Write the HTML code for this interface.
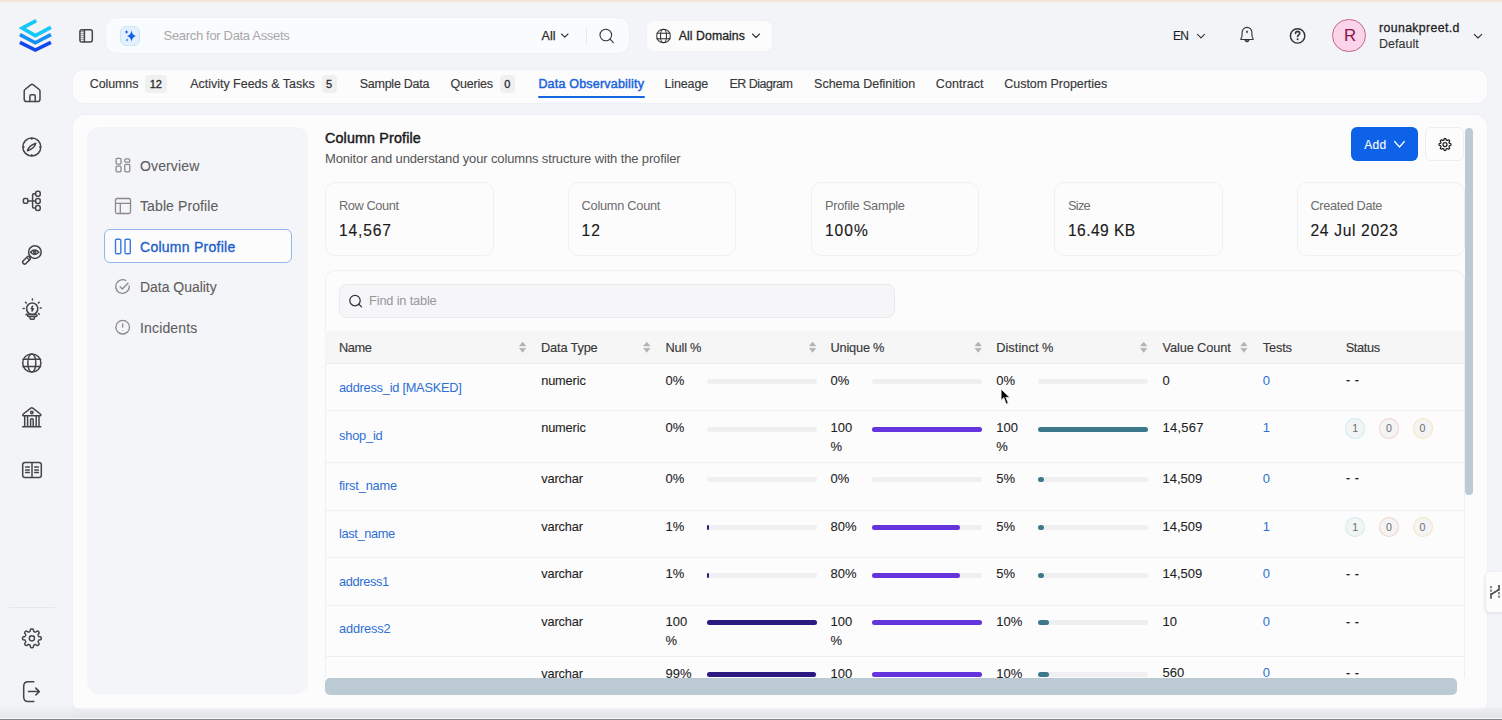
<!DOCTYPE html>
<html><head><meta charset="utf-8"><style>
*{box-sizing:border-box;margin:0;padding:0}
html,body{width:1502px;height:720px;overflow:hidden;background:#f3f4f8;font-family:"Liberation Sans",sans-serif;color:#222}
.a{position:absolute}
.t{position:absolute;white-space:nowrap}
svg.ov{position:absolute;left:0;top:0}
</style></head><body>
<div class="a" style="left:0;top:0;width:1502px;height:2px;background:#f6e2d7"></div>
<div class="a" style="left:0;top:700px;width:73px;height:18px;background:linear-gradient(#f3f4f8,#f0f1f4 45%,#e6e7ea)"></div>
<div class="a" style="left:73px;top:708px;width:1429px;height:10px;background:linear-gradient(#eceef2,#e3e4e8)"></div>
<div class="a" style="left:0;top:718px;width:1502px;height:1px;background:#f7f7f8"></div>
<div class="a" style="left:0;top:719px;width:1502px;height:1px;background:#86868a"></div>
<div class="a" style="left:9.3px;top:606.5px;width:46.2px;height:1px;background:#e6e7eb"></div>
<div class="a" style="left:105px;top:17px;width:525px;height:37px;background:#fafbfc;border-radius:12px;border:1px solid #edf0f5"></div>
<div class="a" style="left:120px;top:26px;width:20px;height:20px;border-radius:6px;background:#e3f0fd;border:1px solid #cce5fa"></div>
<div class="t" style="left:163.6px;top:29.40px;font-size:13px;line-height:13px;color:#a8a8ab;letter-spacing:-0.326px;">Search for Data Assets</div>
<div class="t" style="left:541.6px;top:29.72px;font-size:12.5px;line-height:12.5px;color:#2a2a2a;-webkit-text-stroke:0.25px #2a2a2a;">All</div>
<div class="a" style="left:586px;top:27px;width:1px;height:18px;background:#e6e8ec"></div>
<div class="a" style="left:646px;top:20px;width:127px;height:32px;background:#fcfcfd;border-radius:8px;border:1px solid #f0f1f4"></div>
<div class="t" style="left:678.8px;top:29.89px;font-size:12.3px;line-height:12.3px;color:#1f1f1f;letter-spacing:0.049px;-webkit-text-stroke:0.3px #1f1f1f;">All Domains</div>
<div class="t" style="left:1173.1px;top:29.74px;font-size:12px;line-height:12px;color:#1f1f1f;letter-spacing:-0.772px;-webkit-text-stroke:0.12px #1f1f1f;">EN</div>
<div class="a" style="left:1332.1px;top:18.8px;width:33.5px;height:33.5px;border-radius:50%;background:#fbd4e9;border:1px solid #c3648a"></div>
<div class="t" style="left:1343.9px;top:27.78px;font-size:16.8px;line-height:16.8px;color:#8c1550;letter-spacing:-3.025px;-webkit-text-stroke:0.1px #8c1550;">R</div>
<div class="t" style="left:1379.1px;top:21.59px;font-size:12.3px;line-height:12.3px;color:#1f1f1f;letter-spacing:0.359px;-webkit-text-stroke:0.3px #1f1f1f;">rounakpreet.d</div>
<div class="t" style="left:1379px;top:38.02px;font-size:12.5px;line-height:12.5px;color:#333;letter-spacing:0.015px;-webkit-text-stroke:0.1px #333;">Default</div>
<div class="a" style="left:73px;top:69.5px;width:1413.7px;height:33.5px;background:#fcfcfd;border-radius:10px;box-shadow:0 0 0 1px #eef0f7"></div>
<div class="t" style="left:89.8px;top:77.62px;font-size:12.5px;line-height:12.5px;color:#383838;letter-spacing:-0.121px;-webkit-text-stroke:0.15px #383838;">Columns</div>
<div class="a" style="left:145px;top:75px;width:22px;height:18px;border-radius:4px;background:#eff0f2"></div>
<div class="t" style="left:149.7px;top:78.99px;font-size:11px;line-height:11px;color:#2a2a2a;-webkit-text-stroke:0.3px #2a2a2a;">12</div>
<div class="t" style="left:190.2px;top:77.62px;font-size:12.5px;line-height:12.5px;color:#383838;letter-spacing:-0.015px;-webkit-text-stroke:0.15px #383838;">Activity Feeds &amp; Tasks</div>
<div class="a" style="left:322px;top:75px;width:14.5px;height:18px;border-radius:4px;background:#eff0f2"></div>
<div class="t" style="left:326.05px;top:78.99px;font-size:11px;line-height:11px;color:#2a2a2a;-webkit-text-stroke:0.3px #2a2a2a;">5</div>
<div class="t" style="left:359.7px;top:77.62px;font-size:12.5px;line-height:12.5px;color:#383838;letter-spacing:-0.247px;-webkit-text-stroke:0.15px #383838;">Sample Data</div>
<div class="t" style="left:450.6px;top:77.62px;font-size:12.5px;line-height:12.5px;color:#383838;letter-spacing:-0.23px;-webkit-text-stroke:0.15px #383838;">Queries</div>
<div class="a" style="left:500.4px;top:75px;width:14.200000000000045px;height:18px;border-radius:4px;background:#eff0f2"></div>
<div class="t" style="left:504.3px;top:78.99px;font-size:11px;line-height:11px;color:#2a2a2a;-webkit-text-stroke:0.3px #2a2a2a;">0</div>
<div class="t" style="left:538.4px;top:78.02px;font-size:12.5px;line-height:12.5px;color:#1763dc;letter-spacing:0.199px;-webkit-text-stroke:0.45px #1763dc;">Data Observability</div>
<div class="a" style="left:537.9px;top:96.2px;width:107px;height:2px;background:#1566e0;border-radius:1px"></div>
<div class="t" style="left:664.4px;top:77.62px;font-size:12.5px;line-height:12.5px;color:#383838;letter-spacing:-0.1px;-webkit-text-stroke:0.15px #383838;">Lineage</div>
<div class="t" style="left:729.4px;top:77.62px;font-size:12.5px;line-height:12.5px;color:#383838;letter-spacing:-0.498px;-webkit-text-stroke:0.15px #383838;">ER Diagram</div>
<div class="t" style="left:814.1px;top:77.62px;font-size:12.5px;line-height:12.5px;color:#383838;letter-spacing:-0.028px;-webkit-text-stroke:0.15px #383838;">Schema Definition</div>
<div class="t" style="left:935.8px;top:77.62px;font-size:12.5px;line-height:12.5px;color:#383838;letter-spacing:0.079px;-webkit-text-stroke:0.15px #383838;">Contract</div>
<div class="t" style="left:1004.3px;top:77.62px;font-size:12.5px;line-height:12.5px;color:#383838;letter-spacing:-0.038px;-webkit-text-stroke:0.15px #383838;">Custom Properties</div>
<div class="a" style="left:73px;top:114.7px;width:1413.7px;height:593px;background:#fcfcfd;border-radius:12px 12px 5px 5px;box-shadow:0 0 0 1px #eff1f7"></div>
<div class="a" style="left:87px;top:127.4px;width:221px;height:567px;background:#f4f5f8;border-radius:12px"></div>
<div class="a" style="left:104px;top:229px;width:188px;height:34px;background:#fcfcfd;border:1px solid #8fb6ef;border-radius:6px"></div>
<div class="t" style="left:140px;top:158.85px;font-size:14px;line-height:14px;color:#5e5e5e;letter-spacing:0.134px;-webkit-text-stroke:0.1px #5e5e5e;">Overview</div>
<div class="t" style="left:140px;top:199.35px;font-size:14px;line-height:14px;color:#5e5e5e;letter-spacing:0.104px;-webkit-text-stroke:0.1px #5e5e5e;">Table Profile</div>
<div class="t" style="left:140px;top:239.85px;font-size:14px;line-height:14px;color:#1d60cc;letter-spacing:0.267px;-webkit-text-stroke:0.35px #1d60cc;">Column Profile</div>
<div class="t" style="left:140px;top:280.35px;font-size:14px;line-height:14px;color:#5e5e5e;letter-spacing:-0.032px;-webkit-text-stroke:0.1px #5e5e5e;">Data Quality</div>
<div class="t" style="left:140px;top:320.85px;font-size:14px;line-height:14px;color:#5e5e5e;letter-spacing:0.157px;-webkit-text-stroke:0.1px #5e5e5e;">Incidents</div>
<div class="t" style="left:325px;top:131.00px;font-size:14.3px;line-height:14.3px;color:#1a1a1a;letter-spacing:0.156px;-webkit-text-stroke:0.45px #1a1a1a;">Column Profile</div>
<div class="t" style="left:325px;top:151.80px;font-size:13px;line-height:13px;color:#555;letter-spacing:-0.139px;">Monitor and understand your columns structure with the profiler</div>
<div class="a" style="left:1351px;top:127.4px;width:67.1px;height:33.7px;background:#0e62e8;border-radius:6px"></div>
<div class="t" style="left:1364.3px;top:139.04px;font-size:12px;line-height:12px;color:#fff;letter-spacing:0.27px;-webkit-text-stroke:0.1px #fff;">Add</div>
<div class="a" style="left:1425.4px;top:127.4px;width:38.6px;height:33.5px;background:#fcfcfd;border:1px solid #eceef1;border-radius:6px"></div>
<div class="a" style="left:325px;top:182.3px;width:168.5px;height:73.5px;border:1px solid #edf0f6;border-radius:10px;background:#fcfcfd"></div>
<div class="t" style="left:339px;top:200.06px;font-size:12.8px;line-height:12.8px;color:#6c6c6c;letter-spacing:-0.414px;">Row Count</div>
<div class="t" style="left:339px;top:223.39px;font-size:15.6px;line-height:15.6px;color:#1a1a1a;letter-spacing:0.839px;-webkit-text-stroke:0.15px #1a1a1a;">14,567</div>
<div class="a" style="left:567.6px;top:182.3px;width:168.5px;height:73.5px;border:1px solid #edf0f6;border-radius:10px;background:#fcfcfd"></div>
<div class="t" style="left:581.6px;top:200.06px;font-size:12.8px;line-height:12.8px;color:#6c6c6c;letter-spacing:-0.274px;">Column Count</div>
<div class="t" style="left:581.6px;top:223.39px;font-size:15.6px;line-height:15.6px;color:#1a1a1a;letter-spacing:0.941px;-webkit-text-stroke:0.15px #1a1a1a;">12</div>
<div class="a" style="left:810.9px;top:182.3px;width:168.5px;height:73.5px;border:1px solid #edf0f6;border-radius:10px;background:#fcfcfd"></div>
<div class="t" style="left:824.9px;top:200.06px;font-size:12.8px;line-height:12.8px;color:#6c6c6c;letter-spacing:-0.24px;">Profile Sample</div>
<div class="t" style="left:824.9px;top:223.39px;font-size:15.6px;line-height:15.6px;color:#1a1a1a;letter-spacing:1.036px;-webkit-text-stroke:0.15px #1a1a1a;">100%</div>
<div class="a" style="left:1054px;top:182.3px;width:168.5px;height:73.5px;border:1px solid #edf0f6;border-radius:10px;background:#fcfcfd"></div>
<div class="t" style="left:1068px;top:200.06px;font-size:12.8px;line-height:12.8px;color:#6c6c6c;letter-spacing:-0.735px;">Size</div>
<div class="t" style="left:1068px;top:223.39px;font-size:15.6px;line-height:15.6px;color:#1a1a1a;letter-spacing:0.433px;-webkit-text-stroke:0.15px #1a1a1a;">16.49 KB</div>
<div class="a" style="left:1296.5px;top:182.3px;width:168.5px;height:73.5px;border:1px solid #edf0f6;border-radius:10px;background:#fcfcfd"></div>
<div class="t" style="left:1310.5px;top:200.06px;font-size:12.8px;line-height:12.8px;color:#6c6c6c;letter-spacing:-0.375px;">Created Date</div>
<div class="t" style="left:1310.5px;top:223.39px;font-size:15.6px;line-height:15.6px;color:#1a1a1a;letter-spacing:0.666px;-webkit-text-stroke:0.15px #1a1a1a;">24 Jul 2023</div>
<div class="a" style="left:325px;top:270px;width:1140px;height:408px;border:1px solid #eff0f3;border-bottom:none;border-radius:10px 10px 0 0;background:#fcfcfd"></div>
<div class="a" style="left:338.8px;top:284px;width:556px;height:34px;border:1px solid #e9eaee;border-radius:8px;background:#f6f6f8"></div>
<div class="t" style="left:369.1px;top:294.56px;font-size:12.8px;line-height:12.8px;color:#97979b;letter-spacing:-0.177px;">Find in table</div>
<div class="a" style="left:325px;top:330.7px;width:1139px;height:33.2px;background:#f6f6f7;border-bottom:1px solid #ececee"></div>
<div class="t" style="left:339px;top:341.96px;font-size:12.8px;line-height:12.8px;color:#3a3a3a;letter-spacing:-0.414px;-webkit-text-stroke:0.15px #3a3a3a;">Name</div>
<div class="t" style="left:541px;top:341.96px;font-size:12.8px;line-height:12.8px;color:#3a3a3a;letter-spacing:-0.176px;-webkit-text-stroke:0.15px #3a3a3a;">Data Type</div>
<div class="t" style="left:665.6px;top:341.96px;font-size:12.8px;line-height:12.8px;color:#3a3a3a;letter-spacing:-0.217px;-webkit-text-stroke:0.15px #3a3a3a;">Null %</div>
<div class="t" style="left:830.6px;top:341.96px;font-size:12.8px;line-height:12.8px;color:#3a3a3a;letter-spacing:-0.229px;-webkit-text-stroke:0.15px #3a3a3a;">Unique %</div>
<div class="t" style="left:996.2px;top:341.96px;font-size:12.8px;line-height:12.8px;color:#3a3a3a;letter-spacing:0.045px;-webkit-text-stroke:0.15px #3a3a3a;">Distinct %</div>
<div class="t" style="left:1162.5px;top:341.96px;font-size:12.8px;line-height:12.8px;color:#3a3a3a;letter-spacing:-0.128px;-webkit-text-stroke:0.15px #3a3a3a;">Value Count</div>
<div class="t" style="left:1262.7px;top:341.96px;font-size:12.8px;line-height:12.8px;color:#3a3a3a;letter-spacing:-0.144px;-webkit-text-stroke:0.15px #3a3a3a;">Tests</div>
<div class="t" style="left:1345.7px;top:341.96px;font-size:12.8px;line-height:12.8px;color:#3a3a3a;letter-spacing:-0.356px;-webkit-text-stroke:0.15px #3a3a3a;">Status</div>
<div class="t" style="left:339px;top:382.16px;font-size:12.8px;line-height:12.8px;color:#2e6fd3;letter-spacing:-0.252px;">address_id [MASKED]</div>
<div class="t" style="left:541.2px;top:374.76px;font-size:12.8px;line-height:12.8px;color:#1f1f1f;letter-spacing:-0.153px;-webkit-text-stroke:0.1px #1f1f1f;">numeric</div>
<div class="t" style="left:665.6px;top:373.80px;font-size:13px;line-height:13px;color:#1f1f1f;-webkit-text-stroke:0.1px #1f1f1f;">0%</div>
<div class="t" style="left:830.6px;top:373.80px;font-size:13px;line-height:13px;color:#1f1f1f;-webkit-text-stroke:0.1px #1f1f1f;">0%</div>
<div class="t" style="left:996.2px;top:373.80px;font-size:13px;line-height:13px;color:#1f1f1f;-webkit-text-stroke:0.1px #1f1f1f;">0%</div>
<div class="a" style="left:706.7px;top:379.2px;width:110px;height:5px;border-radius:3px;background:#efeff1"></div>
<div class="a" style="left:872.3px;top:379.2px;width:110px;height:5px;border-radius:3px;background:#efeff1"></div>
<div class="a" style="left:1038.3px;top:379.2px;width:110px;height:5px;border-radius:3px;background:#efeff1"></div>
<div class="t" style="left:1162.5px;top:373.50px;font-size:13px;line-height:13px;color:#1f1f1f;-webkit-text-stroke:0.1px #1f1f1f;">0</div>
<div class="t" style="left:1262.7px;top:373.50px;font-size:13px;line-height:13px;color:#2e6fd3;">0</div>
<div class="t" style="left:1346px;top:374.42px;font-size:12.5px;line-height:12.5px;color:#222;letter-spacing:0.594px;-webkit-text-stroke:0.2px #222;">- -</div>
<div class="a" style="left:325px;top:410.3px;width:1139px;height:1px;background:#eeeff1"></div>
<div class="t" style="left:339px;top:429.66px;font-size:12.8px;line-height:12.8px;color:#2e6fd3;letter-spacing:-0.188px;">shop_id</div>
<div class="t" style="left:541.2px;top:422.36px;font-size:12.8px;line-height:12.8px;color:#1f1f1f;letter-spacing:-0.153px;-webkit-text-stroke:0.1px #1f1f1f;">numeric</div>
<div class="t" style="left:665.6px;top:421.40px;font-size:13px;line-height:13px;color:#1f1f1f;-webkit-text-stroke:0.1px #1f1f1f;">0%</div>
<div class="t" style="left:830.6px;top:421.40px;font-size:13px;line-height:13px;color:#1f1f1f;-webkit-text-stroke:0.1px #1f1f1f;">100</div>
<div class="t" style="left:830.6px;top:440.40px;font-size:13px;line-height:13px;color:#1f1f1f;-webkit-text-stroke:0.1px #1f1f1f;">%</div>
<div class="t" style="left:996.2px;top:421.40px;font-size:13px;line-height:13px;color:#1f1f1f;-webkit-text-stroke:0.1px #1f1f1f;">100</div>
<div class="t" style="left:996.2px;top:440.40px;font-size:13px;line-height:13px;color:#1f1f1f;-webkit-text-stroke:0.1px #1f1f1f;">%</div>
<div class="a" style="left:706.7px;top:426.8px;width:110px;height:5px;border-radius:3px;background:#efeff1"></div>
<div class="a" style="left:872.3px;top:426.8px;width:110px;height:5px;border-radius:3px;background:#efeff1"></div>
<div class="a" style="left:872.3px;top:426.8px;width:110.0px;height:5px;border-radius:2.5px;background:#6434dd"></div>
<div class="a" style="left:1038.3px;top:426.8px;width:110px;height:5px;border-radius:3px;background:#efeff1"></div>
<div class="a" style="left:1038.3px;top:426.8px;width:110.0px;height:5px;border-radius:2.5px;background:#3c7a8b"></div>
<div class="t" style="left:1162.5px;top:421.10px;font-size:13px;line-height:13px;color:#1f1f1f;letter-spacing:0.227px;-webkit-text-stroke:0.1px #1f1f1f;">14,567</div>
<div class="t" style="left:1262.7px;top:421.10px;font-size:13px;line-height:13px;color:#2e6fd3;">1</div>
<div class="a" style="left:1345.2px;top:418.3px;width:20.2px;height:20.4px;border-radius:50%;border:1px solid #d2eaf3;background:#f1f6f3"></div>
<div class="t" style="left:1352.3px;top:423.23px;font-size:10.6px;line-height:10.6px;color:#6c6c6c;">1</div>
<div class="a" style="left:1378.9px;top:418.3px;width:20.2px;height:20.4px;border-radius:50%;border:1px solid #f4d3c9;background:#f4f4f5"></div>
<div class="t" style="left:1386px;top:423.23px;font-size:10.6px;line-height:10.6px;color:#6c6c6c;">0</div>
<div class="a" style="left:1412.5px;top:418.3px;width:20.2px;height:20.4px;border-radius:50%;border:1px solid #f5e6bf;background:#f4f4f5"></div>
<div class="t" style="left:1419.6px;top:423.23px;font-size:10.6px;line-height:10.6px;color:#6c6c6c;">0</div>
<div class="a" style="left:325px;top:461.5px;width:1139px;height:1px;background:#eeeff1"></div>
<div class="t" style="left:339px;top:480.46px;font-size:12.8px;line-height:12.8px;color:#2e6fd3;letter-spacing:-0.183px;">first_name</div>
<div class="t" style="left:541.2px;top:472.76px;font-size:12.8px;line-height:12.8px;color:#1f1f1f;letter-spacing:-0.129px;-webkit-text-stroke:0.1px #1f1f1f;">varchar</div>
<div class="t" style="left:665.6px;top:471.80px;font-size:13px;line-height:13px;color:#1f1f1f;-webkit-text-stroke:0.1px #1f1f1f;">0%</div>
<div class="t" style="left:830.6px;top:471.80px;font-size:13px;line-height:13px;color:#1f1f1f;-webkit-text-stroke:0.1px #1f1f1f;">0%</div>
<div class="t" style="left:996.2px;top:471.80px;font-size:13px;line-height:13px;color:#1f1f1f;-webkit-text-stroke:0.1px #1f1f1f;">5%</div>
<div class="a" style="left:706.7px;top:477.2px;width:110px;height:5px;border-radius:3px;background:#efeff1"></div>
<div class="a" style="left:872.3px;top:477.2px;width:110px;height:5px;border-radius:3px;background:#efeff1"></div>
<div class="a" style="left:1038.3px;top:477.2px;width:110px;height:5px;border-radius:3px;background:#efeff1"></div>
<div class="a" style="left:1038.3px;top:477.2px;width:5.5px;height:5px;border-radius:2.5px;background:#3c7a8b"></div>
<div class="t" style="left:1162.5px;top:471.50px;font-size:13px;line-height:13px;color:#1f1f1f;-webkit-text-stroke:0.1px #1f1f1f;">14,509</div>
<div class="t" style="left:1262.7px;top:471.50px;font-size:13px;line-height:13px;color:#2e6fd3;">0</div>
<div class="t" style="left:1346px;top:472.42px;font-size:12.5px;line-height:12.5px;color:#222;letter-spacing:0.594px;-webkit-text-stroke:0.2px #222;">- -</div>
<div class="a" style="left:325px;top:509.5px;width:1139px;height:1px;background:#eeeff1"></div>
<div class="t" style="left:339px;top:527.66px;font-size:12.8px;line-height:12.8px;color:#2e6fd3;letter-spacing:-0.368px;">last_name</div>
<div class="t" style="left:541.2px;top:520.76px;font-size:12.8px;line-height:12.8px;color:#1f1f1f;letter-spacing:-0.129px;-webkit-text-stroke:0.1px #1f1f1f;">varchar</div>
<div class="t" style="left:665.6px;top:519.80px;font-size:13px;line-height:13px;color:#1f1f1f;-webkit-text-stroke:0.1px #1f1f1f;">1%</div>
<div class="t" style="left:830.6px;top:519.80px;font-size:13px;line-height:13px;color:#1f1f1f;-webkit-text-stroke:0.1px #1f1f1f;">80%</div>
<div class="t" style="left:996.2px;top:519.80px;font-size:13px;line-height:13px;color:#1f1f1f;-webkit-text-stroke:0.1px #1f1f1f;">5%</div>
<div class="a" style="left:706.7px;top:525.2px;width:110px;height:5px;border-radius:3px;background:#efeff1"></div>
<div class="a" style="left:706.7px;top:525.2px;width:2.2px;height:5px;border-radius:1.1px;background:#2b1b80"></div>
<div class="a" style="left:872.3px;top:525.2px;width:110px;height:5px;border-radius:3px;background:#efeff1"></div>
<div class="a" style="left:872.3px;top:525.2px;width:88.0px;height:5px;border-radius:2.5px;background:#6434dd"></div>
<div class="a" style="left:1038.3px;top:525.2px;width:110px;height:5px;border-radius:3px;background:#efeff1"></div>
<div class="a" style="left:1038.3px;top:525.2px;width:5.5px;height:5px;border-radius:2.5px;background:#3c7a8b"></div>
<div class="t" style="left:1162.5px;top:519.50px;font-size:13px;line-height:13px;color:#1f1f1f;-webkit-text-stroke:0.1px #1f1f1f;">14,509</div>
<div class="t" style="left:1262.7px;top:519.50px;font-size:13px;line-height:13px;color:#2e6fd3;">1</div>
<div class="a" style="left:1345.2px;top:516.7px;width:20.2px;height:20.4px;border-radius:50%;border:1px solid #d2eaf3;background:#f1f6f3"></div>
<div class="t" style="left:1352.3px;top:521.63px;font-size:10.6px;line-height:10.6px;color:#6c6c6c;">1</div>
<div class="a" style="left:1378.9px;top:516.7px;width:20.2px;height:20.4px;border-radius:50%;border:1px solid #f4d3c9;background:#f4f4f5"></div>
<div class="t" style="left:1386px;top:521.63px;font-size:10.6px;line-height:10.6px;color:#6c6c6c;">0</div>
<div class="a" style="left:1412.5px;top:516.7px;width:20.2px;height:20.4px;border-radius:50%;border:1px solid #f5e6bf;background:#f4f4f5"></div>
<div class="t" style="left:1419.6px;top:521.63px;font-size:10.6px;line-height:10.6px;color:#6c6c6c;">0</div>
<div class="a" style="left:325px;top:557.2px;width:1139px;height:1px;background:#eeeff1"></div>
<div class="t" style="left:339px;top:575.66px;font-size:12.8px;line-height:12.8px;color:#2e6fd3;letter-spacing:-0.365px;">address1</div>
<div class="t" style="left:541.2px;top:568.16px;font-size:12.8px;line-height:12.8px;color:#1f1f1f;letter-spacing:-0.129px;-webkit-text-stroke:0.1px #1f1f1f;">varchar</div>
<div class="t" style="left:665.6px;top:567.20px;font-size:13px;line-height:13px;color:#1f1f1f;-webkit-text-stroke:0.1px #1f1f1f;">1%</div>
<div class="t" style="left:830.6px;top:567.20px;font-size:13px;line-height:13px;color:#1f1f1f;-webkit-text-stroke:0.1px #1f1f1f;">80%</div>
<div class="t" style="left:996.2px;top:567.20px;font-size:13px;line-height:13px;color:#1f1f1f;-webkit-text-stroke:0.1px #1f1f1f;">5%</div>
<div class="a" style="left:706.7px;top:572.6px;width:110px;height:5px;border-radius:3px;background:#efeff1"></div>
<div class="a" style="left:706.7px;top:572.6px;width:2.2px;height:5px;border-radius:1.1px;background:#2b1b80"></div>
<div class="a" style="left:872.3px;top:572.6px;width:110px;height:5px;border-radius:3px;background:#efeff1"></div>
<div class="a" style="left:872.3px;top:572.6px;width:88.0px;height:5px;border-radius:2.5px;background:#6434dd"></div>
<div class="a" style="left:1038.3px;top:572.6px;width:110px;height:5px;border-radius:3px;background:#efeff1"></div>
<div class="a" style="left:1038.3px;top:572.6px;width:5.5px;height:5px;border-radius:2.5px;background:#3c7a8b"></div>
<div class="t" style="left:1162.5px;top:566.90px;font-size:13px;line-height:13px;color:#1f1f1f;-webkit-text-stroke:0.1px #1f1f1f;">14,509</div>
<div class="t" style="left:1262.7px;top:566.90px;font-size:13px;line-height:13px;color:#2e6fd3;">0</div>
<div class="t" style="left:1346px;top:567.82px;font-size:12.5px;line-height:12.5px;color:#222;letter-spacing:0.594px;-webkit-text-stroke:0.2px #222;">- -</div>
<div class="a" style="left:325px;top:604.9px;width:1139px;height:1px;background:#eeeff1"></div>
<div class="t" style="left:339px;top:623.26px;font-size:12.8px;line-height:12.8px;color:#2e6fd3;letter-spacing:-0.137px;">address2</div>
<div class="t" style="left:541.2px;top:615.96px;font-size:12.8px;line-height:12.8px;color:#1f1f1f;letter-spacing:-0.129px;-webkit-text-stroke:0.1px #1f1f1f;">varchar</div>
<div class="t" style="left:665.6px;top:615.00px;font-size:13px;line-height:13px;color:#1f1f1f;-webkit-text-stroke:0.1px #1f1f1f;">100</div>
<div class="t" style="left:665.6px;top:634.00px;font-size:13px;line-height:13px;color:#1f1f1f;-webkit-text-stroke:0.1px #1f1f1f;">%</div>
<div class="t" style="left:830.6px;top:615.00px;font-size:13px;line-height:13px;color:#1f1f1f;-webkit-text-stroke:0.1px #1f1f1f;">100</div>
<div class="t" style="left:830.6px;top:634.00px;font-size:13px;line-height:13px;color:#1f1f1f;-webkit-text-stroke:0.1px #1f1f1f;">%</div>
<div class="t" style="left:996.2px;top:615.00px;font-size:13px;line-height:13px;color:#1f1f1f;-webkit-text-stroke:0.1px #1f1f1f;">10%</div>
<div class="a" style="left:706.7px;top:620.4000000000001px;width:110px;height:5px;border-radius:3px;background:#efeff1"></div>
<div class="a" style="left:706.7px;top:620.4000000000001px;width:110.0px;height:5px;border-radius:2.5px;background:#2b1b80"></div>
<div class="a" style="left:872.3px;top:620.4000000000001px;width:110px;height:5px;border-radius:3px;background:#efeff1"></div>
<div class="a" style="left:872.3px;top:620.4000000000001px;width:110.0px;height:5px;border-radius:2.5px;background:#6434dd"></div>
<div class="a" style="left:1038.3px;top:620.4000000000001px;width:110px;height:5px;border-radius:3px;background:#efeff1"></div>
<div class="a" style="left:1038.3px;top:620.4000000000001px;width:11.0px;height:5px;border-radius:2.5px;background:#3c7a8b"></div>
<div class="t" style="left:1162.5px;top:614.70px;font-size:13px;line-height:13px;color:#1f1f1f;-webkit-text-stroke:0.1px #1f1f1f;">10</div>
<div class="t" style="left:1262.7px;top:614.70px;font-size:13px;line-height:13px;color:#2e6fd3;">0</div>
<div class="t" style="left:1346px;top:615.62px;font-size:12.5px;line-height:12.5px;color:#222;letter-spacing:0.594px;-webkit-text-stroke:0.2px #222;">- -</div>
<div class="a" style="left:325px;top:656.3px;width:1139px;height:1px;background:#eeeff1"></div>
<div class="t" style="left:541.2px;top:667.56px;font-size:12.8px;line-height:12.8px;color:#1f1f1f;letter-spacing:-0.129px;-webkit-text-stroke:0.1px #1f1f1f;">varchar</div>
<div class="t" style="left:665.6px;top:666.60px;font-size:13px;line-height:13px;color:#1f1f1f;-webkit-text-stroke:0.1px #1f1f1f;">99%</div>
<div class="t" style="left:830.6px;top:666.60px;font-size:13px;line-height:13px;color:#1f1f1f;-webkit-text-stroke:0.1px #1f1f1f;">100</div>
<div class="t" style="left:996.2px;top:666.60px;font-size:13px;line-height:13px;color:#1f1f1f;-webkit-text-stroke:0.1px #1f1f1f;">10%</div>
<div class="a" style="left:706.7px;top:672.0px;width:110px;height:5px;border-radius:3px;background:#efeff1"></div>
<div class="a" style="left:706.7px;top:672.0px;width:108.9px;height:5px;border-radius:2.5px;background:#2b1b80"></div>
<div class="a" style="left:872.3px;top:672.0px;width:110px;height:5px;border-radius:3px;background:#efeff1"></div>
<div class="a" style="left:872.3px;top:672.0px;width:110.0px;height:5px;border-radius:2.5px;background:#6434dd"></div>
<div class="a" style="left:1038.3px;top:672.0px;width:110px;height:5px;border-radius:3px;background:#efeff1"></div>
<div class="a" style="left:1038.3px;top:672.0px;width:11.0px;height:5px;border-radius:2.5px;background:#3c7a8b"></div>
<div class="t" style="left:1162.5px;top:666.30px;font-size:13px;line-height:13px;color:#1f1f1f;-webkit-text-stroke:0.1px #1f1f1f;">560</div>
<div class="t" style="left:1262.7px;top:666.30px;font-size:13px;line-height:13px;color:#2e6fd3;">0</div>
<div class="t" style="left:1346px;top:667.22px;font-size:12.5px;line-height:12.5px;color:#222;letter-spacing:0.594px;-webkit-text-stroke:0.2px #222;">- -</div>
<div class="a" style="left:325px;top:678px;width:1132px;height:16.5px;background:#bccad3;border-radius:5px"></div>
<div class="a" style="left:1465px;top:127.5px;width:7.8px;height:367.8px;background:#bdcad3;border-radius:4px"></div>
<div class="a" style="left:1485.8px;top:571.5px;width:30px;height:40.5px;background:#fcfcfd;border-radius:4px;box-shadow:-1px 1px 3px rgba(0,0,0,0.10)"></div>
<svg class="ov" width="1502" height="720" viewBox="0 0 1502 720"><g fill="none" stroke-linejoin="miter" stroke-linecap="butt" stroke-width="3.6"><path d="M36.3 20.6 L22.2 28.1 L35.3 35.6 L50.9 27.4" stroke="#14c8f8"/><path d="M19.9 34.6 L35.3 42.8 L50.9 34.6" stroke="#168ff5"/><path d="M19.9 42.3 L35.3 50.1 L50.9 42.3" stroke="#1247ee"/></g><g fill="none" stroke="#454545" stroke-width="1.5" stroke-linecap="round" stroke-linejoin="round"><path d="M24.2 99 V91.2 Q24.2 90.2 25 89.5 L31 84.6 Q32 83.8 33 84.6 L39.2 89.5 Q40 90.2 40 91.2 V99 Q40 101.6 37.5 101.6 H26.7 Q24.2 101.6 24.2 99 Z"/><path d="M29.9 101.6 V96 Q29.9 94.8 31.1 94.8 H34 Q35.2 94.8 35.2 96 V101.6"/><circle cx="31.8" cy="147" r="9"/><path d="M31.8 138.2 V139.3 M31.8 154.8 V155.8 M23 147 H24 M39.6 147 H40.6"/><path d="M27.5 150.8 Q28.8 145.5 35.8 143.2 Q34.6 148.5 27.5 150.8 Z"/><rect x="23.4" y="198.6" width="4.4" height="4.6" rx="1.2"/><rect x="35.6" y="191.3" width="4.6" height="5" rx="2"/><rect x="35.6" y="198.4" width="4.6" height="5" rx="2"/><rect x="35.6" y="205.5" width="4.6" height="5" rx="2"/><path d="M27.8 200.9 H35.6 M35.6 193.8 H33.6 Q32.6 193.8 32.6 195 V206.8 Q32.6 208 33.6 208 H35.6"/><circle cx="34.9" cy="252.1" r="6.3"/><path d="M30.5 252.2 Q34.7 247.8 38.9 252.2 Q34.7 256.6 30.5 252.2 Z"/><circle cx="34.7" cy="252.2" r="1.1"/><path d="M30.4 256.6 L29.6 257.4"/><rect x="24.6" y="255.6" width="3.8" height="9.2" rx="1.9" transform="rotate(45 26.5 260.2)"/><path d="M27.4 258.1 L29.2 259.9" stroke-width="1.3"/><path d="M29.8 314.2 Q26.6 312.3 26.6 308.6 A5.6 5.6 0 0 1 37.8 308.6 Q37.8 312.3 34.6 314.2 Z"/><path d="M28.4 314.5 H36 Q37 314.5 37 315.5 Q37 316.5 36 316.5 H28.4 Q27.4 316.5 27.4 315.5 Q27.4 314.5 28.4 314.5 Z M30 316.6 V318.3 Q30 319.2 31 319.2 H33.5 Q34.4 319.2 34.4 318.3 V316.6"/><path d="M32.4 299 V300 M25.5 302.2 L26.2 302.9 M39.2 302.2 L38.5 302.9 M23.2 308.6 H24.2 M40.2 308 H41.2 M26 314.7 L26.8 314 M38.6 313.5 L39.3 314.2"/><path d="M32.6 306.2 L31.2 308.8 H33.4 L32 311"/><circle cx="31.8" cy="363" r="9.1"/><ellipse cx="31.8" cy="363" rx="4" ry="9.1"/><path d="M23 359.3 H40.6 M23 366.6 H40.6"/><path d="M23.5 415.8 Q22 415.3 23.3 414 L30.8 408.2 Q31.8 407.5 32.8 408.2 L40.3 414 Q41.6 415.3 40.1 415.8 Z"/><circle cx="31.8" cy="412.5" r="1.2"/><path d="M22.6 426.8 H40.8 M24.7 416 V426.5 M27.6 416 V426.5 M36.2 416 V426.5 M39 416 V426.5 M30.6 426.5 V419.8 Q30.6 418.8 31.6 418.8 H32.2 Q33.2 418.8 33.2 419.8 V426.5"/><path d="M25 462.5 H32 V477.6 H25 Q22.7 477.6 22.7 475.3 V464.8 Q22.7 462.5 25 462.5 Z M32 462.5 H39 Q41.3 462.5 41.3 464.8 V475.3 Q41.3 477.6 39 477.6 H32"/><path d="M25.6 467 H29.3 M25.6 469.9 H29.3 M25.6 472.6 H29.3 M34.7 467 H38.4 M34.7 469.9 H38.4 M34.7 472.6 H38.4"/><path d="M33.8 681.8 H28.2 Q23.7 681.8 23.7 686.3 V697 Q23.7 701.6 28.2 701.6 H33.8"/><path d="M28.4 691.6 H39.3 M35.8 688.1 L39.3 691.6 L35.8 695"/><path d="M80.6 31.6 H84 M80.6 33.6 H84 M80.6 35.6 H84 M80.6 37.6 H84 M80.6 39.6 H84" stroke="#9a9a9a" stroke-width="1"/><rect x="79.9" y="29.8" width="12.4" height="12.2" rx="2"/><path d="M84.4 30 V41.8"/></g><path d="M31.90 628.90 L32.15 628.91 L32.39 628.93 L32.63 628.97 L32.87 629.05 L33.10 629.20 L33.29 629.50 L33.44 630.00 L33.53 630.61 L33.63 631.11 L33.74 631.42 L33.89 631.59 L34.04 631.70 L34.21 631.78 L34.37 631.86 L34.54 631.93 L34.71 631.99 L34.88 632.06 L35.05 632.12 L35.24 632.15 L35.46 632.13 L35.76 632.00 L36.18 631.71 L36.68 631.34 L37.14 631.09 L37.49 631.02 L37.75 631.07 L37.98 631.18 L38.18 631.32 L38.37 631.48 L38.55 631.65 L38.72 631.83 L38.88 632.02 L39.02 632.22 L39.13 632.45 L39.18 632.71 L39.11 633.06 L38.86 633.52 L38.49 634.02 L38.20 634.44 L38.07 634.74 L38.05 634.96 L38.08 635.15 L38.14 635.32 L38.21 635.49 L38.27 635.66 L38.34 635.83 L38.42 635.99 L38.50 636.16 L38.61 636.31 L38.78 636.46 L39.09 636.57 L39.59 636.67 L40.20 636.76 L40.70 636.91 L41.00 637.10 L41.15 637.33 L41.23 637.57 L41.27 637.81 L41.29 638.05 L41.30 638.30 L41.29 638.55 L41.27 638.79 L41.23 639.03 L41.15 639.27 L41.00 639.50 L40.70 639.69 L40.20 639.84 L39.59 639.93 L39.09 640.03 L38.78 640.14 L38.61 640.29 L38.50 640.44 L38.42 640.61 L38.34 640.77 L38.27 640.94 L38.21 641.11 L38.14 641.28 L38.08 641.45 L38.05 641.64 L38.07 641.86 L38.20 642.16 L38.49 642.58 L38.86 643.08 L39.11 643.54 L39.18 643.89 L39.13 644.15 L39.02 644.38 L38.88 644.58 L38.72 644.77 L38.55 644.95 L38.37 645.12 L38.18 645.28 L37.98 645.42 L37.75 645.53 L37.49 645.58 L37.14 645.51 L36.68 645.26 L36.18 644.89 L35.76 644.60 L35.46 644.47 L35.24 644.45 L35.05 644.48 L34.88 644.54 L34.71 644.61 L34.54 644.67 L34.37 644.74 L34.21 644.82 L34.04 644.90 L33.89 645.01 L33.74 645.18 L33.63 645.49 L33.53 645.99 L33.44 646.60 L33.29 647.10 L33.10 647.40 L32.87 647.55 L32.63 647.63 L32.39 647.67 L32.15 647.69 L31.90 647.70 L31.65 647.69 L31.41 647.67 L31.17 647.63 L30.93 647.55 L30.70 647.40 L30.51 647.10 L30.36 646.60 L30.27 645.99 L30.17 645.49 L30.06 645.18 L29.91 645.01 L29.76 644.90 L29.59 644.82 L29.43 644.74 L29.26 644.67 L29.09 644.61 L28.92 644.54 L28.75 644.48 L28.56 644.45 L28.34 644.47 L28.04 644.60 L27.62 644.89 L27.12 645.26 L26.66 645.51 L26.31 645.58 L26.05 645.53 L25.82 645.42 L25.62 645.28 L25.43 645.12 L25.25 644.95 L25.08 644.77 L24.92 644.58 L24.78 644.38 L24.67 644.15 L24.62 643.89 L24.69 643.54 L24.94 643.08 L25.31 642.58 L25.60 642.16 L25.73 641.86 L25.75 641.64 L25.72 641.45 L25.66 641.28 L25.59 641.11 L25.53 640.94 L25.46 640.77 L25.38 640.61 L25.30 640.44 L25.19 640.29 L25.02 640.14 L24.71 640.03 L24.21 639.93 L23.60 639.84 L23.10 639.69 L22.80 639.50 L22.65 639.27 L22.57 639.03 L22.53 638.79 L22.51 638.55 L22.50 638.30 L22.51 638.05 L22.53 637.81 L22.57 637.57 L22.65 637.33 L22.80 637.10 L23.10 636.91 L23.60 636.76 L24.21 636.67 L24.71 636.57 L25.02 636.46 L25.19 636.31 L25.30 636.16 L25.38 635.99 L25.46 635.83 L25.53 635.66 L25.59 635.49 L25.66 635.32 L25.72 635.15 L25.75 634.96 L25.73 634.74 L25.60 634.44 L25.31 634.02 L24.94 633.52 L24.69 633.06 L24.62 632.71 L24.67 632.45 L24.78 632.22 L24.92 632.02 L25.08 631.83 L25.25 631.65 L25.43 631.48 L25.62 631.32 L25.82 631.18 L26.05 631.07 L26.31 631.02 L26.66 631.09 L27.12 631.34 L27.62 631.71 L28.04 632.00 L28.34 632.13 L28.56 632.15 L28.75 632.12 L28.92 632.06 L29.09 631.99 L29.26 631.93 L29.43 631.86 L29.59 631.78 L29.76 631.70 L29.91 631.59 L30.06 631.42 L30.17 631.11 L30.27 630.61 L30.36 630.00 L30.51 629.50 L30.70 629.20 L30.93 629.05 L31.17 628.97 L31.41 628.93 L31.65 628.91 Z" fill="none" stroke="#454545" stroke-width="1.45" stroke-linejoin="round"/><circle cx="31.9" cy="638.3" r="2.6" fill="none" stroke="#454545" stroke-width="1.45"/><path d="M1445.00 138.50 L1445.16 138.50 L1445.31 138.52 L1445.47 138.54 L1445.62 138.59 L1445.77 138.68 L1445.89 138.87 L1445.99 139.17 L1446.06 139.53 L1446.12 139.84 L1446.20 140.02 L1446.29 140.13 L1446.40 140.20 L1446.50 140.25 L1446.61 140.30 L1446.72 140.34 L1446.83 140.39 L1446.94 140.43 L1447.05 140.47 L1447.18 140.49 L1447.32 140.49 L1447.51 140.41 L1447.76 140.24 L1448.07 140.03 L1448.35 139.88 L1448.57 139.85 L1448.74 139.88 L1448.88 139.96 L1449.01 140.05 L1449.13 140.15 L1449.24 140.26 L1449.35 140.37 L1449.45 140.49 L1449.54 140.62 L1449.62 140.76 L1449.65 140.93 L1449.62 141.15 L1449.47 141.43 L1449.26 141.74 L1449.09 141.99 L1449.01 142.18 L1449.01 142.32 L1449.03 142.45 L1449.07 142.56 L1449.11 142.67 L1449.16 142.78 L1449.20 142.89 L1449.25 143.00 L1449.30 143.10 L1449.37 143.21 L1449.48 143.30 L1449.66 143.38 L1449.97 143.44 L1450.33 143.51 L1450.63 143.61 L1450.82 143.73 L1450.91 143.88 L1450.96 144.03 L1450.98 144.19 L1451.00 144.34 L1451.00 144.50 L1451.00 144.66 L1450.98 144.81 L1450.96 144.97 L1450.91 145.12 L1450.82 145.27 L1450.63 145.39 L1450.33 145.49 L1449.97 145.56 L1449.66 145.62 L1449.48 145.70 L1449.37 145.79 L1449.30 145.90 L1449.25 146.00 L1449.20 146.11 L1449.16 146.22 L1449.11 146.33 L1449.07 146.44 L1449.03 146.55 L1449.01 146.68 L1449.01 146.82 L1449.09 147.01 L1449.26 147.26 L1449.47 147.57 L1449.62 147.85 L1449.65 148.07 L1449.62 148.24 L1449.54 148.38 L1449.45 148.51 L1449.35 148.63 L1449.24 148.74 L1449.13 148.85 L1449.01 148.95 L1448.88 149.04 L1448.74 149.12 L1448.57 149.15 L1448.35 149.12 L1448.07 148.97 L1447.76 148.76 L1447.51 148.59 L1447.32 148.51 L1447.18 148.51 L1447.05 148.53 L1446.94 148.57 L1446.83 148.61 L1446.72 148.66 L1446.61 148.70 L1446.50 148.75 L1446.40 148.80 L1446.29 148.87 L1446.20 148.98 L1446.12 149.16 L1446.06 149.47 L1445.99 149.83 L1445.89 150.13 L1445.77 150.32 L1445.62 150.41 L1445.47 150.46 L1445.31 150.48 L1445.16 150.50 L1445.00 150.50 L1444.84 150.50 L1444.69 150.48 L1444.53 150.46 L1444.38 150.41 L1444.23 150.32 L1444.11 150.13 L1444.01 149.83 L1443.94 149.47 L1443.88 149.16 L1443.80 148.98 L1443.71 148.87 L1443.60 148.80 L1443.50 148.75 L1443.39 148.70 L1443.28 148.66 L1443.17 148.61 L1443.06 148.57 L1442.95 148.53 L1442.82 148.51 L1442.68 148.51 L1442.49 148.59 L1442.24 148.76 L1441.93 148.97 L1441.65 149.12 L1441.43 149.15 L1441.26 149.12 L1441.12 149.04 L1440.99 148.95 L1440.87 148.85 L1440.76 148.74 L1440.65 148.63 L1440.55 148.51 L1440.46 148.38 L1440.38 148.24 L1440.35 148.07 L1440.38 147.85 L1440.53 147.57 L1440.74 147.26 L1440.91 147.01 L1440.99 146.82 L1440.99 146.68 L1440.97 146.55 L1440.93 146.44 L1440.89 146.33 L1440.84 146.22 L1440.80 146.11 L1440.75 146.00 L1440.70 145.90 L1440.63 145.79 L1440.52 145.70 L1440.34 145.62 L1440.03 145.56 L1439.67 145.49 L1439.37 145.39 L1439.18 145.27 L1439.09 145.12 L1439.04 144.97 L1439.02 144.81 L1439.00 144.66 L1439.00 144.50 L1439.00 144.34 L1439.02 144.19 L1439.04 144.03 L1439.09 143.88 L1439.18 143.73 L1439.37 143.61 L1439.67 143.51 L1440.03 143.44 L1440.34 143.38 L1440.52 143.30 L1440.63 143.21 L1440.70 143.10 L1440.75 143.00 L1440.80 142.89 L1440.84 142.78 L1440.89 142.67 L1440.93 142.56 L1440.97 142.45 L1440.99 142.32 L1440.99 142.18 L1440.91 141.99 L1440.74 141.74 L1440.53 141.43 L1440.38 141.15 L1440.35 140.93 L1440.38 140.76 L1440.46 140.62 L1440.55 140.49 L1440.65 140.37 L1440.76 140.26 L1440.87 140.15 L1440.99 140.05 L1441.12 139.96 L1441.26 139.88 L1441.43 139.85 L1441.65 139.88 L1441.93 140.03 L1442.24 140.24 L1442.49 140.41 L1442.68 140.49 L1442.82 140.49 L1442.95 140.47 L1443.06 140.43 L1443.17 140.39 L1443.28 140.34 L1443.39 140.30 L1443.50 140.25 L1443.60 140.20 L1443.71 140.13 L1443.80 140.02 L1443.88 139.84 L1443.94 139.53 L1444.01 139.17 L1444.11 138.87 L1444.23 138.68 L1444.38 138.59 L1444.53 138.54 L1444.69 138.52 L1444.84 138.50 Z" fill="none" stroke="#222" stroke-width="1.25" stroke-linejoin="round"/><circle cx="1445" cy="144.5" r="2.0" fill="none" stroke="#222" stroke-width="1.25"/><g fill="none" stroke="#333" stroke-width="1.1" stroke-linecap="round" stroke-linejoin="round"><path d="M561.5 34 L564.8 37.2 L568 34"/><path d="M752.5 34 L756 37.5 L759.5 34"/><path d="M1197.5 34.3 L1201 37.8 L1204.5 34.3"/><path d="M1474.3 34.3 L1478 38 L1481.7 34.3"/><circle cx="605.8" cy="35" r="5.8"/><path d="M610 39.2 L613.4 42.6"/><circle cx="663.5" cy="36" r="6.8"/><ellipse cx="663.5" cy="36" rx="3" ry="6.8"/><path d="M656.9 33.3 H670.1 M656.9 38.7 H670.1"/><path d="M1240.9 38.6 Q1242.1 37.3 1242.1 34.8 V32.3 A4.9 4.9 0 0 1 1251.9 32.3 V34.8 Q1251.9 37.3 1253.1 38.6 Q1253.6 39.5 1252.6 39.5 H1241.4 Q1240.4 39.5 1240.9 38.6 Z"/><path d="M1245.4 40.2 Q1247 42.6 1248.6 40.2" stroke-width="1.6"/><path d="M1247 31.3 V32.5" stroke-width="1.4"/><circle cx="1297.6" cy="35.9" r="7.2" stroke-width="1.4"/><path d="M1295.5 33.4 Q1295.7 31.4 1297.7 31.4 Q1299.7 31.5 1299.7 33.3 Q1299.7 34.5 1298.4 35.2 Q1297.6 35.7 1297.6 36.6" stroke-width="1.6"/><circle cx="1297.6" cy="39.3" r="0.45" fill="#333" stroke-width="1.1"/></g><path d="M131.5 30.5 Q132.3 35 136 36 Q132.3 37 131.5 41.5 Q130.7 37 127 36 Q130.7 35 131.5 30.5 Z" fill="#1761e8"/><path d="M126.6 30 Q126.9 31.7 128.4 32 Q126.9 32.3 126.6 34 Q126.3 32.3 124.8 32 Q126.3 31.7 126.6 30 Z" fill="#1761e8"/><path d="M127 38.6 Q127.2 39.8 128.2 40 Q127.2 40.2 127 41.4 Q126.8 40.2 125.8 40 Q126.8 39.8 127 38.6 Z" fill="#1761e8"/><path d="M1394.6 141.5 L1399.5 147 L1404.3 141.5" fill="none" stroke="#fff" stroke-width="1.2" stroke-linecap="round" stroke-linejoin="round"/><g fill="none" stroke="#8a8a8a" stroke-width="1.3" stroke-linejoin="round"><rect x="116.05" y="158.45" width="5" height="5.6" rx="1.2"/><rect x="124.75" y="158.95" width="5" height="3.2" rx="1.2"/><rect x="116.05" y="166.2" width="5" height="5.6" rx="1.2"/><rect x="124.75" y="164.4" width="5" height="7.4" rx="1.2"/><rect x="115.5" y="198.5" width="15" height="15" rx="1.5"/><path d="M115.5 203.3 H130.5 M120.3 203.3 V213.5"/><path d="M129.2 285.3 A6.8 6.8 0 1 1 126.2 280.8"/><path d="M119.7 286.4 L122.3 289 L128.4 282.8"/><circle cx="122.7" cy="327.2" r="6.8"/><path d="M122.7 323.6 V327.4 M122.7 330 V330.4"/></g><g fill="none" stroke="#3a7be0" stroke-width="1.4" stroke-linejoin="round"><rect x="115.5" y="239.3" width="5.3" height="14.5" rx="1.2"/><rect x="125" y="239.3" width="5.3" height="14.5" rx="1.2"/></g><g fill="none" stroke="#333" stroke-width="1.25" stroke-linecap="round"><circle cx="355" cy="300.6" r="5.2"/><path d="M358.9 304.3 L361.5 306.9"/></g><path d="M519.3000000000001 346 L522.6 341.9 L525.9 346 Z M519.3000000000001 348.3 L522.6 352.4 L525.9 348.3 Z" fill="#b2b2b6" stroke="#b2b2b6" stroke-width="0.4" stroke-linejoin="round"/><path d="M643.5 346 L646.8 341.9 L650.0999999999999 346 Z M643.5 348.3 L646.8 352.4 L650.0999999999999 348.3 Z" fill="#b2b2b6" stroke="#b2b2b6" stroke-width="0.4" stroke-linejoin="round"/><path d="M809.3000000000001 346 L812.6 341.9 L815.9 346 Z M809.3000000000001 348.3 L812.6 352.4 L815.9 348.3 Z" fill="#b2b2b6" stroke="#b2b2b6" stroke-width="0.4" stroke-linejoin="round"/><path d="M974.9000000000001 346 L978.2 341.9 L981.5 346 Z M974.9000000000001 348.3 L978.2 352.4 L981.5 348.3 Z" fill="#b2b2b6" stroke="#b2b2b6" stroke-width="0.4" stroke-linejoin="round"/><path d="M1140.4 346 L1143.7 341.9 L1147.0 346 Z M1140.4 348.3 L1143.7 352.4 L1147.0 348.3 Z" fill="#b2b2b6" stroke="#b2b2b6" stroke-width="0.4" stroke-linejoin="round"/><path d="M1240.6000000000001 346 L1243.9 341.9 L1247.2 346 Z M1240.6000000000001 348.3 L1243.9 352.4 L1247.2 348.3 Z" fill="#b2b2b6" stroke="#b2b2b6" stroke-width="0.4" stroke-linejoin="round"/><path d="M1001.6 390.6 L1001.6 401.3 L1004.3 398.6 L1006.7 404.9 L1008.7 404 L1006.3 398.3 L1010.3 398.5 Z" fill="#000" opacity="0.12"/><path d="M1001.1 389.2 L1001.1 400.3 L1003.8 397.6 L1006.2 403.9 L1008.2 403 L1005.8 397.3 L1009.8 397.5 Z" fill="#000" stroke="#fff" stroke-width="0.7" stroke-linejoin="round"/><path d="M1491 586 V598.5 M1491 594.5 L1499 589.5 M1499 585 V598.5" fill="none" stroke="#555" stroke-width="1.4" stroke-dasharray="2.2 1.3"/><path d="M1491 594.5 V598.5 M1491 594.5 L1499 589.5 V585" fill="none" stroke="#555" stroke-width="1.5"/></svg>
</body></html>
